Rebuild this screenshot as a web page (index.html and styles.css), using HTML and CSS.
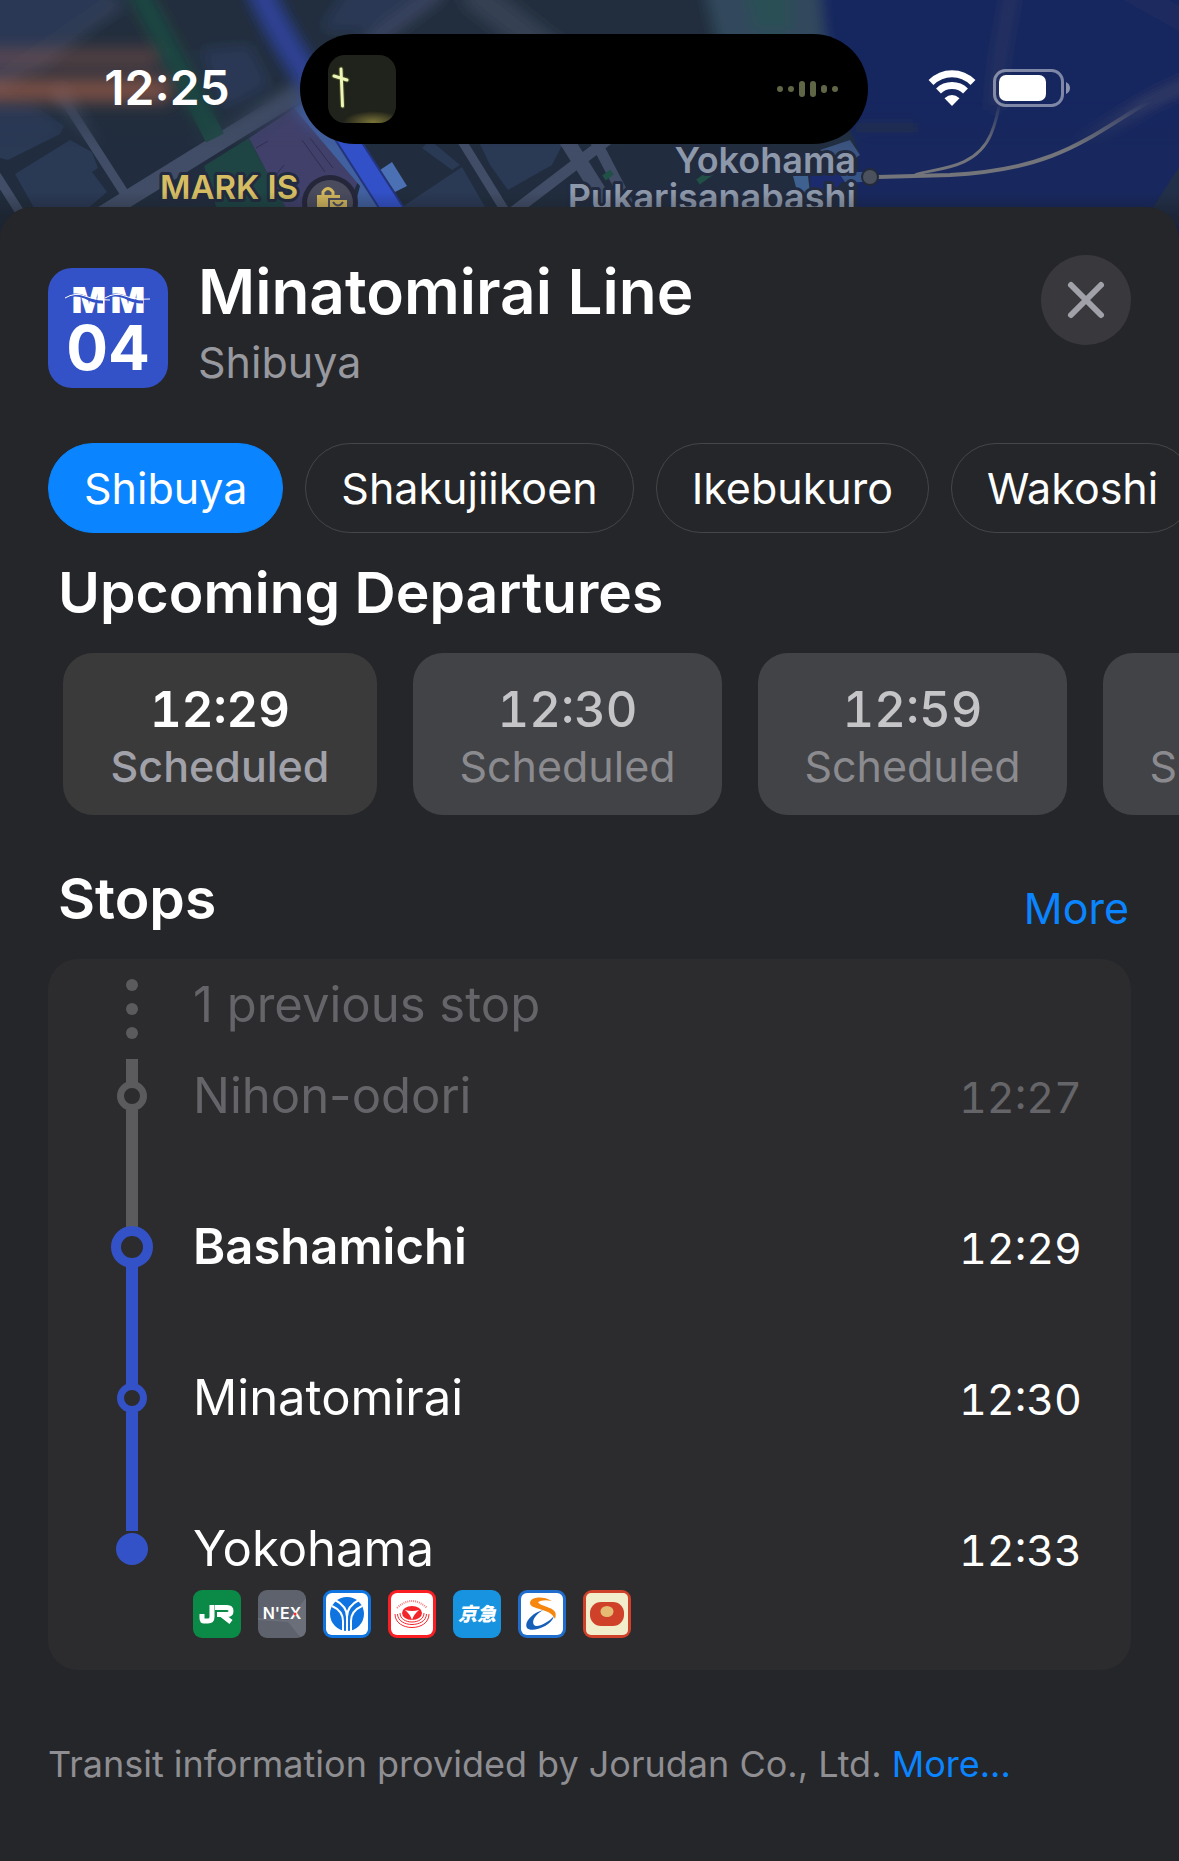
FILE: index.html
```html
<!DOCTYPE html>
<html lang="en">
<head>
<meta charset="utf-8">
<meta name="viewport" content="width=device-width, initial-scale=1">
<title>Minatomirai Line</title>
<link rel="stylesheet" href="styles.css">
</head>
<body>
<header class="map">
  <svg class="map-art" viewBox="0 0 1179 240" preserveAspectRatio="xMidYMin slice" aria-hidden="true">
    <defs>
      <filter id="soft" x="-5%" y="-20%" width="110%" height="140%"><feGaussianBlur stdDeviation="7"/></filter>
      <filter id="softer" x="-20%" y="-60%" width="140%" height="220%"><feGaussianBlur stdDeviation="8"/></filter>
      <linearGradient id="fade" x1="0" y1="0" x2="0" y2="1">
        <stop offset="0" stop-color="#fff"/><stop offset=".45" stop-color="#fff"/><stop offset=".62" stop-color="#000"/>
      </linearGradient>
      <linearGradient id="shade" x1="0" y1="0" x2="0" y2="1">
        <stop offset=".8" stop-color="#14161c" stop-opacity="0"/><stop offset=".9" stop-color="#14161c" stop-opacity=".35"/>
      </linearGradient>
      <mask id="top"><rect x="-20" y="-20" width="1220" height="270" fill="url(#fade)"/></mask>
    </defs>
    <g id="ground">
      <rect x="-30" y="-30" width="1240" height="290" fill="#212d3e"/>
      <g fill="#2a3954">
        <path d="M-30 -30H120L95 25L40 70L-30 80Z"/>
        <path d="M-30 100L32 104L64 126L60 134L8 160L-30 150Z"/>
        <path d="M15 174L70 140L92 152L98 168L92 172L107 192L80 215H38Z"/>
        <path d="M200 50L250 45L270 85L225 110Z"/>
        <path d="M360 -30H450L380 30H320Z"/>
        <path d="M478 140H565L552 165L508 190L490 165Z"/>
        <path d="M405 205L462 167L485 207V220H405Z"/>
        <path d="M430 140L460 165L452 170L422 148Z"/>
      </g>
      <g fill="none" stroke="#414d66">
        <path d="M90 222L310 86" stroke-width="17"/>
        <path d="M58 90L132 205" stroke-width="9"/>
        <path d="M-10 165L28 225" stroke-width="9"/>
        <path d="M455 130L512 222" stroke-width="9"/>
        <path d="M500 222L610 138L640 120" stroke-width="11"/>
        <path d="M560 130L618 222" stroke-width="15"/>
        <path d="M595 140L634 215" stroke-width="11"/>
        <path d="M-10 90L120 0" stroke-width="14" stroke="#303d56"/>
        <path d="M300 95L440 -10" stroke-width="14" stroke="#3a4560"/>
        <path d="M470 -10L560 60" stroke-width="30" stroke="#343f53"/>
      </g>
      <path d="M700 -30H840V50H720Z" fill="#32485d"/>
      <path d="M740 -30H790V30H755Z" fill="#2c4f55"/>
      <path d="M132 -20Q175 60 215 138" fill="none" stroke="#1e4743" stroke-width="20"/>
      <path d="M204 166L249 138L292 220H220Z" fill="#1e4444"/>
      <path d="M249 138L295 108L358 182L340 220H292Z" fill="#40406a"/>
      <path d="M256 148L268 141M302 140L325 172M310 138L333 168M270 182L284 165" stroke="#2d2f50" fill="none"/>
      <path d="M294 108L312 98L420 225H350L360 186Z" fill="#41609f"/>
      <path d="M380 170L392 162L407 186L395 192Z" fill="#4c70b4"/>
      <path d="M252 -30C272 25 300 65 330 112L412 240" fill="none" stroke="#24357e" stroke-width="23"/>
      <path d="M252 -30C272 25 300 65 330 112L412 240" fill="none" stroke="#3251c8" stroke-width="19"/>
      <path d="M604 178L612 172M698 182L712 172" stroke="#205046" stroke-width="6"/>
      <path d="M819 -30C822 60 835 90 858 150L856 240H1210V-30Z" fill="#18285e"/>
      <path d="M793 176L808 176L812 210H802Z" fill="#3e6190"/>
      <path d="M820 150L850 140L860 155L845 165Z" fill="#3b5580"/>
      <path d="M810 176L860 172V184L842 182L820 207H812Z" fill="#1b2b6e"/>
      <path d="M838 172H864V182H845Z" fill="#385587"/>
      <path d="M856 123H918V132H856Z" fill="#202f50"/>
      <path d="M1150 212L1185 158V225H1150Z" fill="#222f48"/>
    </g>
    <g fill="none" stroke="#73757b">
      <path d="M878 177L950 175C1085 168 1100 118 1200 76" stroke-width="4"/>
      <path d="M915 175C930 168 975 172 991 134S1000 50 1013 -20" stroke-width="3"/>
    </g>
    <g mask="url(#top)"><g filter="url(#soft)"><use href="#ground"/>
      <path d="M252 -30C272 25 300 65 330 112" fill="none" stroke="#2d4394" stroke-width="22"/>
      <g fill="none" stroke="#454c6a"><path d="M1080 146C1120 122 1150 96 1200 80" stroke-width="6"/><path d="M995 110C998 50 1008 20 1013 -20" stroke-width="12" stroke="#28345f"/><path d="M1110 -20L1200 30" stroke-width="14" stroke="#222f60"/></g>
    </g></g>
    <g filter="url(#softer)" fill="#b06247"><rect x="-20" y="48" width="178" height="20" opacity=".35"/><rect x="-20" y="78" width="190" height="24" opacity=".6"/></g>
    <circle cx="870" cy="177" r="8" fill="#4b515d" stroke="#232a3a" stroke-width="2"/>
    <circle cx="330" cy="203" r="28" fill="#25263a"/>
    <circle cx="330" cy="203" r="23" fill="#4a4c5e"/>
    <path d="M317 195H340V210H317Z" fill="#d3b75b"/>
    <path d="M323 196V192Q328 185 333 192V196" fill="none" stroke="#d3b75b" stroke-width="3"/>
    <path d="M329 199H348V214H329Z" fill="#d3b75b" stroke="#4a4c5e" stroke-width="2"/>
    <path d="M333 202Q338 209 343 202" fill="none" stroke="#4a4c5e" stroke-width="2"/>
    <g class="map-label">
      <text x="160" y="199" font-size="33" fill="#d6bd62">MARK IS</text>
      <text x="856" y="173" font-size="36" text-anchor="end" fill="#8d98aa">Yokohama</text>
      <text x="856" y="210" font-size="36" text-anchor="end" fill="#8d98aa">Pukarisanabashi</text>
    </g>
    <rect width="1179" height="240" fill="url(#shade)"/>
  </svg>
  <div class="status">
    <time class="clock">12:25</time>
    <div class="island">
      <svg width="68" height="68" viewBox="0 0 68 68" aria-hidden="true">
        <defs><clipPath id="art"><rect width="68" height="68" rx="17"/></clipPath><radialGradient id="hill"><stop offset="0" stop-color="#7a7438"/><stop offset="1" stop-color="#20221a"/></radialGradient></defs>
        <g clip-path="url(#art)"><rect width="68" height="68" fill="#20231c"/>
        <ellipse cx="45" cy="67" rx="30" ry="11" fill="url(#hill)"/>
        <path d="M13 14L14.500 51M6 21L19 25" stroke="#69732f" stroke-width="5" stroke-linecap="round" opacity=".5"/>
        <path d="M13 14L14.500 51M6 21L19 25" stroke="#eef5b8" stroke-width="3" stroke-linecap="round"/></g>
      </svg>
      <svg width="61" height="16" viewBox="0 0 61 16" fill="#5f6645" aria-hidden="true">
        <circle cx="3" cy="8" r="3"/><circle cx="14" cy="8" r="3"/><rect x="22" width="6" height="16" rx="3"/><rect x="33" width="6" height="16" rx="3"/><rect x="44" y="4" width="6" height="8" rx="3"/><circle cx="58" cy="8" r="3"/>
      </svg>
    </div>
    <div class="signals">
      <svg width="48" height="36" viewBox="0 0 48 36" aria-label="Wi-Fi" role="img">
        <g fill="none" stroke="#fff" stroke-width="7"><path d="M3 12.500C15 .8 33 .8 45 12.500"/><path d="M10.500 21C18 13.800 30 13.800 37.500 21"/></g>
        <path d="M24 36L16.500 28.300Q24 21.800 31.500 28.300Z" fill="#fff"/>
      </svg>
      <svg width="78" height="38" viewBox="0 0 78 38" aria-label="Battery" role="img">
        <rect x="1.500" y="1.500" width="68" height="35" rx="11" fill="none" stroke="#fff" stroke-opacity=".45" stroke-width="3"/>
        <rect x="6" y="6" width="47" height="26" rx="7" fill="#fff"/>
        <path d="M73 13Q77 15 77 19T73 25Z" fill="#fff" fill-opacity=".5"/>
      </svg>
    </div>
  </div>
</header>

<main class="sheet">
  <div class="line-head">
    <div class="badge">
      <svg width="86" height="30" viewBox="0 0 86 30" aria-label="MM" role="img">
        <g class="mm-text" text-anchor="middle"><text x="24" y="29">M</text><text x="63" y="29">M</text></g>
        <path d="M1 13Q10 9 20 13Q28 18 38 18M41 13Q50 9 60 13Q68 18 78 18" fill="none" stroke="#3452c7" stroke-width="3"/>
        <path d="M0 14Q10 8 20 12T45 16M40 14Q50 8 60 12T85 15" fill="none" stroke="#fff" stroke-width="1"/>
      </svg>
      <span class="badge-num">04</span>
    </div>
    <div class="titles">
      <h1>Minatomirai Line</h1>
      <p>Shibuya</p>
    </div>
    <button class="close" type="button" aria-label="Close">
      <svg width="40" height="40" viewBox="0 0 40 40" aria-hidden="true"><path d="M5 5L35 35M35 5L5 35" stroke="#a1a1aa" stroke-width="6" stroke-linecap="round"/></svg>
    </button>
  </div>

  <nav class="chips" aria-label="Directions">
    <button class="chip selected" type="button">Shibuya</button>
    <button class="chip" type="button">Shakujiikoen</button>
    <button class="chip" type="button">Ikebukuro</button>
    <button class="chip" type="button">Wakoshi</button>
  </nav>

  <h2>Upcoming Departures</h2>
  <div class="departures">
    <button class="departure current" type="button"><b>12:29</b><span>Scheduled</span></button>
    <button class="departure" type="button"><b>12:30</b><span>Scheduled</span></button>
    <button class="departure" type="button"><b>12:59</b><span>Scheduled</span></button>
    <button class="departure" type="button"><b>13:00</b><span>Scheduled</span></button>
  </div>

  <div class="section-head">
    <h2>Stops</h2>
    <a href="#stops">More</a>
  </div>

  <ol class="stops" id="stops">
    <li class="previous">
      <span class="dots"><i></i><i></i><i></i></span>
      <span class="name">1 previous stop</span>
    </li>
    <li class="stop past">
      <span class="rail"><i class="seg lead"></i><i class="ring"></i><i class="seg"></i></span>
      <span class="name">Nihon-odori</span><time>12:27</time>
    </li>
    <li class="stop here">
      <span class="rail"><i class="seg lead"></i><i class="ring"></i><i class="seg"></i></span>
      <span class="name">Bashamichi</span><time>12:29</time>
    </li>
    <li class="stop">
      <span class="rail"><i class="seg lead"></i><i class="ring"></i><i class="seg"></i></span>
      <span class="name">Minatomirai</span><time>12:30</time>
    </li>
    <li class="stop last">
      <span class="rail"><i class="seg lead"></i><i class="ring"></i></span>
      <span class="name">Yokohama</span><time>12:33</time>
      <span class="lines">
        <svg viewBox="0 0 48 48" role="img" aria-label="JR"><rect width="48" height="48" rx="9" fill="#0b8a47"/><path d="M19 15V27Q19 31 15 31H11Q9 31 9 28V24M22 17.500H34Q38 17.500 38 21T34 24.500H24M29 25L38 32" fill="none" stroke="#fff" stroke-width="5"/></svg>
        <svg viewBox="0 0 48 48" role="img" aria-label="N'EX"><rect width="48" height="48" rx="9" fill="#5e626c"/><path d="M30 30L48 8V39Q48 46 42 47L30 32L0 30V28Z" fill="#6b6f79"/><text x="24" y="29" text-anchor="middle" class="nex">N'EX</text><circle cx="37" cy="24" r="1.500" fill="#f33"/></svg>
        <svg viewBox="0 0 48 48" role="img" aria-label="Yokohama Municipal Subway"><rect width="48" height="48" rx="9" fill="#0f74e0"/><rect x="3" y="3" width="42" height="42" rx="6" fill="#fff"/><circle cx="24" cy="24" r="17" fill="#0f74e0"/><g fill="none" stroke="#fff" stroke-width="2"><path d="M20 43V31Q20 21 9 16M28 43V31Q28 21 39 16M24 43V27M12 10Q24 16 24 27M36 10Q24 16 24 27"/></g></svg>
        <svg viewBox="0 0 48 48" role="img" aria-label="Tokyu"><rect width="48" height="48" rx="9" fill="#fb1f24"/><rect x="3" y="3" width="42" height="42" rx="6" fill="#fff"/><ellipse cx="24" cy="23" rx="10" ry="7" fill="#f3252b"/><path d="M17 20Q24 22 31 20Q26 24 24 30Q22 24 17 20Z" fill="#fff"/><g fill="none" stroke="#f3252b" stroke-width="1"><path d="M12 23C12 35 36 35 36 23"/><path d="M9.500 24C10 38 38 38 38.500 24"/><path d="M7 24C7 42 41 42 41 24"/><path d="M9 18Q24 4 39 18" stroke-width="2" stroke-dasharray="1 1" stroke-opacity=".6"/></g></svg>
        <svg viewBox="0 0 48 48" role="img" aria-label="Keikyu"><rect width="48" height="48" rx="9" fill="#1793e0"/><text x="24" y="31" text-anchor="middle" class="keikyu">京急</text></svg>
        <svg viewBox="0 0 48 48" role="img" aria-label="Sotetsu"><rect width="48" height="48" rx="9" fill="#1f6dcc"/><rect x="3" y="3" width="42" height="42" rx="6" fill="#fff"/><path d="M34 11C24 5 12 7 12 13C12 20 33 18 37 29C42 16 23 18 20 12Q25 9 34 11Z" fill="#f6860d"/><path d="M25 20C14 23 6 32 9 38C13 43 33 37 36 26C30 33 19 38 16 35C13 31 18 24 25 20Z" fill="#155fb8"/></svg>
        <svg viewBox="0 0 48 48" role="img" aria-label="Bus"><rect width="48" height="48" rx="9" fill="#cf4229"/><rect x="3" y="3" width="42" height="42" rx="5" fill="#f2eecb"/><rect x="7" y="12" width="34" height="24" rx="11" fill="#cf4229"/><ellipse cx="24" cy="21.500" rx="6.500" ry="5.500" fill="#e5ba72"/></svg>
      </span>
    </li>
  </ol>

  <footer>Transit information provided by Jorudan Co., Ltd. <a href="#about">More...</a></footer>
</main>
</body>
</html>
```
FILE: styles.css
```css
* { box-sizing: border-box; }
body {
  margin: 0;
  background: #252629;
  color: #fff;
  font-family: Inter, "Liberation Sans", sans-serif;
  overflow-x: hidden;
}
h1, h2, p, ol { margin: 0; padding: 0; }
h1, h2 { font-weight: 600; }
button { font: inherit; color: inherit; border: 0; padding: 0; flex: none; }
a { color: #0a84ff; text-decoration: none; }
svg { display: block; flex: none; }

.map { position: relative; height: 240px; overflow: hidden; background: #212d3e; }
.map-art { position: absolute; inset: 0; width: 100%; height: 100%; }
.map-label { font-weight: 600; paint-order: stroke; stroke: #222b3f; stroke-width: 6px; stroke-linejoin: round; }
.status {
  position: relative;
  display: grid;
  grid-template-columns: 300fr 568px 311fr;
  align-items: center;
  padding-top: 34px;
}
.clock { padding: 0 0 2px 34px; text-align: center; font-size: 48px; font-weight: 600; line-height: 56px; }
.island {
  display: flex;
  align-items: center;
  justify-content: space-between;
  height: 110px;
  padding: 0 30px 0 28px;
  border-radius: 55px;
  background: #000;
}
.signals { display: flex; align-items: center; gap: 17px; padding: 0 0 2px 60px; }

.sheet {
  position: relative;
  margin-top: -33px;
  padding: 48px 48px 72px;
  border-radius: 32px 32px 0 0;
  background: #252629;
  overflow: hidden;
}
.line-head { display: flex; align-items: flex-start; gap: 30px; margin-bottom: 48px; }
.badge {
  display: flex;
  flex-direction: column;
  align-items: center;
  gap: 8px;
  width: 120px;
  height: 120px;
  margin-top: 13px;
  padding-top: 16px;
  border-radius: 24px;
  background: #3452c7;
}
.mm-text { font-size: 36px; font-weight: 900; fill: #fff; }
.badge-num { font-size: 62px; font-weight: 700; line-height: 52px; }
.titles { flex: 1; }
h1 { font-size: 62px; line-height: 74px; }
.titles p { color: #98989f; font-size: 43px; line-height: 66px; }
.close {
  display: grid;
  place-items: center;
  width: 90px;
  height: 90px;
  border-radius: 50%;
  background: #39393d;
}

.chips { display: flex; gap: 22px; margin-right: -48px; overflow: hidden; }
.chip {
  height: 90px;
  padding: 0 35px;
  border: 1px solid #464649;
  border-radius: 45px;
  background: none;
  font-size: 43px;
}
.chip.selected { background: #0a84ff; border-color: #0a84ff; }

h2 { padding-left: 10px; font-size: 57px; line-height: 120px; }
.departures { display: flex; gap: 36px; margin-right: -48px; padding-left: 15px; overflow: hidden; }
.departure {
  display: flex;
  flex-direction: column;
  align-items: center;
  width: 309px;
  height: 162px;
  padding-top: 29px;
  border-radius: 30px;
  background: #424347;
  color: #8b8b8f;
  font-size: 43px;
  line-height: 56px;
}
.departure b { color: #c5c5c8; font-size: 49px; font-weight: 500; font-variant-numeric: tabular-nums; }
.departure.current { width: 314px; background: #3a3a3b; color: #a1a1a9; font-weight: 500; }
.departure.current b { color: #fff; font-weight: 600; }

.section-head { display: flex; justify-content: space-between; align-items: flex-end; padding-top: 24px; }
.section-head a { padding-right: 2px; font-size: 43px; line-height: 102px; }

.stops { list-style: none; border-radius: 30px; background: #2c2c2e; font-size: 49px; line-height: 74px; }
.previous, .stop {
  display: grid;
  grid-template-columns: 42px 1fr auto;
  column-gap: 40px;
  align-items: baseline;
  padding: 0 49px 0 63px;
}
.previous { height: 100px; color: #656569; padding-top: 9px; }
.dots { display: flex; flex-direction: column; align-items: center; gap: 12px; padding-top: 11px; align-self: start; }
.dots i { width: 12px; height: 12px; border-radius: 50%; background: #5b5b5d; }
.stop { min-height: 151px; grid-template-rows: 74px; }
.stop time { font-size: 43px; font-variant-numeric: tabular-nums; }
.rail { grid-row: 1 / 3; align-self: stretch; display: flex; flex-direction: column; align-items: center; color: #3452c7; }
.seg { width: 12px; flex: 1; background: currentColor; }
.seg.lead { flex: 0 0 23px; }
.ring { flex: none; width: 30px; height: 30px; margin: -1px 0; border: 7px solid currentColor; border-radius: 50%; }
.past { color: #656569; }
.past .rail { color: #5b5b5d; }
.here .name { font-weight: 600; }
.here .lead { flex-basis: 17px; background: #5b5b5d; }
.here .ring { width: 42px; height: 42px; border-width: 10px; }
.last { padding-bottom: 32px; }
.last .lead { flex-basis: 19px; }
.last .ring { width: 32px; height: 32px; margin-top: 2px; background: currentColor; }
.lines { grid-column: 2; display: flex; gap: 17px; padding-top: 4px; align-self: start; }
.lines svg { width: 48px; height: 48px; }
.nex { font-size: 16px; font-weight: 600; fill: #fff; }
.keikyu { font-family: "Noto Sans CJK JP", sans-serif; font-size: 19px; font-weight: 900; font-style: italic; fill: #fff; }

footer { padding-top: 70px; color: #8e8e93; font-size: 36px; line-height: 48px; }
```
